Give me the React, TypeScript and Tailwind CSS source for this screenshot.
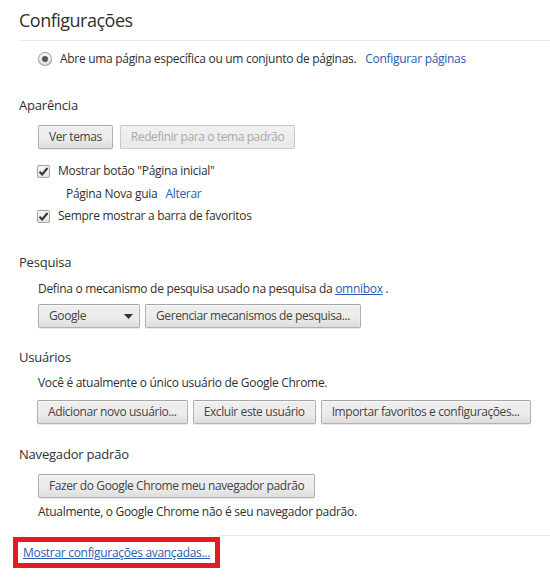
import React from 'react';

const btn =
  "h-[24px] px-[10px] rounded-[2px] border border-black/25 bg-linear-to-b from-[#ededed] via-[#ededed] to-[#dedede] text-[#444] shadow-[0_1px_0_rgba(0,0,0,0.08),inset_0_1px_2px_rgba(255,255,255,0.75)] text-[12px] tracking-[-0.4px] leading-none whitespace-nowrap";

const btnDisabled =
  "h-[24px] px-[10px] rounded-[2px] border border-black/15 bg-linear-to-b from-[#f1f1f1] to-[#e9e9e9] text-[#aaa] text-[12px] tracking-[-0.4px] leading-none whitespace-nowrap";

const Checkbox = () => (
  <span className="w-[13px] h-[13px] rounded-[2px] border border-black/30 bg-linear-to-b from-[#f8f8f8] to-[#e2e2e2] flex items-center justify-center shrink-0">
    <svg width="11" height="11" viewBox="0 0 11 11">
      <path d="M1.5 5.8 L4.2 8.5 L9.5 2" fill="none" stroke="#333" strokeWidth="2" />
    </svg>
  </span>
);

const Radio = () => (
  <span className="w-[14px] h-[14px] rounded-full border border-black/30 bg-linear-to-b from-[#f8f8f8] to-[#dcdcdc] flex items-center justify-center shrink-0">
    <span className="w-[6px] h-[6px] rounded-full bg-[#555]" />
  </span>
);

const Section = ({ title, className, children }: { title: string; className: string; children: React.ReactNode }) => (
  <section className={className}>
    <h3 className="h-[20px] flex items-center text-[13px] tracking-[-0.2px] text-[#303030]">{title}</h3>
    {children}
  </section>
);

export default function App() {
  return (
    <div className="w-[550px] h-[578px] overflow-hidden bg-white text-[#303030] text-[12px] tracking-[-0.3px] font-['Open_Sans',sans-serif]">
      <header className="ml-[19px] h-[41px] border-b border-[#ebebeb] flex items-end pb-[11px]">
        <h1 className="text-[18px] tracking-[-0.5px] leading-none text-[#303030]">Configurações</h1>
      </header>

      <div className="pl-[38px] mt-[8px] h-[20px] flex items-center gap-[8px]">
        <Radio />
        <span>Abre uma página específica ou um conjunto de páginas.</span>
        <a className="ml-[1px] text-[#2a5db0]">Configurar páginas</a>
      </div>

      <Section title="Aparência" className="pl-[19px] mt-[27px]">
        <div className="pl-[19px] mt-[9px] flex gap-[7px]">
          <button className={btn}>Ver temas</button>
          <button className={btnDisabled}>Redefinir para o tema padrão</button>
        </div>
        <div className="pl-[18px] mt-[11px] flex flex-col">
          <label className="h-[22px] flex items-center gap-[8px]">
            <Checkbox />
            <span>Mostrar botão "Página inicial"</span>
          </label>
          <div className="h-[23px] pl-[29px] flex items-center gap-[8px]">
            <span>Página Nova guia</span>
            <a className="text-[#2a5db0]">Alterar</a>
          </div>
          <label className="h-[22px] flex items-center gap-[8px]">
            <Checkbox />
            <span>Sempre mostrar a barra de favoritos</span>
          </label>
        </div>
      </Section>

      <Section title="Pesquisa" className="pl-[19px] mt-[26px]">
        <div className="pl-[19px] mt-[6px] h-[20px] flex items-center">
          Defina o mecanismo de pesquisa usado na pesquisa da&nbsp;
          <a className="text-[#2a5db0] underline">omnibox</a>&nbsp;.
        </div>
        <div className="pl-[19px] mt-[5px] flex gap-[5px]">
          <div className={`${btn} w-[102px] pr-[6px] flex items-center justify-between`}>
            <span>Google</span>
            <svg width="9" height="5" viewBox="0 0 9 5">
              <path d="M0 0 H9 L4.5 5 Z" fill="#333" />
            </svg>
          </div>
          <button className={btn}>Gerenciar mecanismos de pesquisa...</button>
        </div>
      </Section>

      <Section title="Usuários" className="pl-[19px] mt-[20px]">
        <div className="pl-[19px] mt-[5px] h-[20px] flex items-center">
          Você é atualmente o único usuário de Google Chrome.
        </div>
        <div className="pl-[18px] mt-[7px] flex gap-[5px]">
          <button className={btn}>Adicionar novo usuário...</button>
          <button className={btn}>Excluir este usuário</button>
          <button className={btn}>Importar favoritos e configurações...</button>
        </div>
      </Section>

      <Section title="Navegador padrão" className="pl-[19px] mt-[21px]">
        <div className="pl-[19px] mt-[9px] flex">
          <button className={btn}>Fazer do Google Chrome meu navegador padrão</button>
        </div>
        <div className="pl-[19px] mt-[4px] h-[20px] flex items-center">
          Atualmente, o Google Chrome não é seu navegador padrão.
        </div>
      </Section>

      <footer className="mt-[13px] flex items-start">
        <div className="ml-[13px] mt-[2px] h-[31px] border-[5px] border-[#e41b23] pl-[5px] pr-[5px] flex items-center">
          <a className="text-[#2a5db0] underline">Mostrar configurações avançadas...</a>
        </div>
        <div className="flex-1 border-t border-[#e6e6e6]" />
      </footer>
    </div>
  );
}
